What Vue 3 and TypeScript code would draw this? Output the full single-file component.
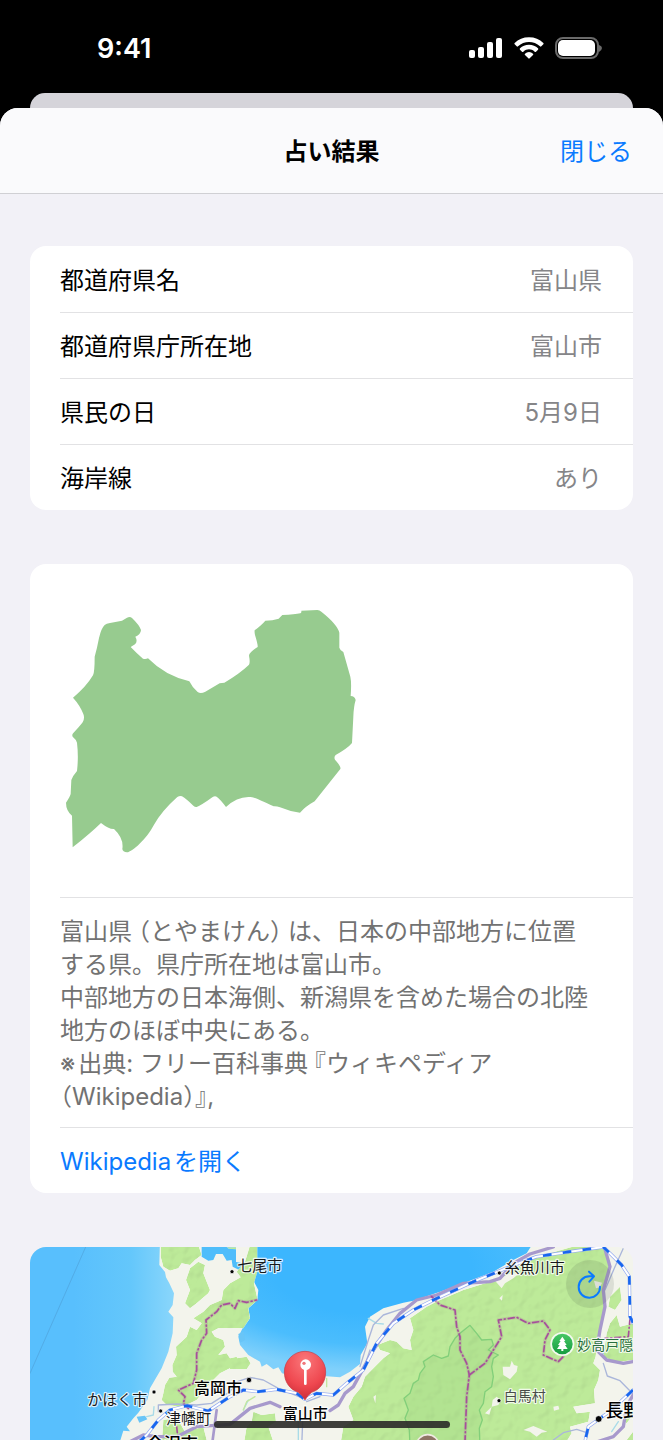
<script setup lang="ts">
interface Fact {
  label: string
  value: string
}

interface Place {
  name: string
  x: number
  y: number
  size: number
  kind: string
}

interface Dot {
  x: number
  y: number
  r: number
}

const facts: Fact[] = [
  { label: '都道府県名', value: '富山県' },
  { label: '都道府県庁所在地', value: '富山市' },
  { label: '県民の日', value: '5月9日' },
  { label: '海岸線', value: 'あり' },
]

const places: Place[] = [
  { name: '七尾市', x: 622, y: 94, size: 45, kind: 'town' },
  { name: '高岡市', x: 492, y: 463, size: 48, kind: 'city' },
  { name: 'かほく市', x: 172, y: 495, size: 45, kind: 'town' },
  { name: '津幡町', x: 408, y: 553, size: 45, kind: 'town' },
  { name: '金沢市', x: 350, y: 630, size: 51, kind: 'city' },
  { name: '富山市', x: 758, y: 537, size: 45, kind: 'city' },
  { name: '糸魚川市', x: 1424, y: 99, size: 45, kind: 'town' },
  { name: '妙高戸隠', x: 1642, y: 331, size: 42, kind: 'park' },
  { name: '白馬村', x: 1421, y: 482, size: 42, kind: 'village' },
  { name: '長野', x: 1726, y: 532, size: 54, kind: 'city' },
]

const dots: Dot[] = [
  { x: 606, y: 95, r: 6 },
  { x: 657, y: 420, r: 8 },
  { x: 372, y: 456, r: 6 },
  { x: 392, y: 513, r: 6 },
  { x: 1408, y: 99, r: 6 },
  { x: 1407, y: 482, r: 6 },
  { x: 1706, y: 537, r: 10 },
]

const railMain =
  'M325 608L350 585L385 540L420 510L470 497L535 513L600 470L640 450L685 455L740 448L800 460L825 478L860 460L910 465L950 430L1000 390L1040 310L1090 250L1150 210L1210 180L1330 125L1440 80L1520 50L1620 35L1720 21L1745 45L1775 75L1798 110L1800 230L1809 248'
const railNagano = 'M1809 450L1745 510L1675 560L1665 604'
</script>

<template>
  <div class="screen">
    <div class="status">
      <span class="clock">9:41</span>
      <div class="indicators">
        <svg width="34" height="22" viewBox="0 0 34 22" aria-hidden="true">
          <rect x="0" y="13" width="6" height="8" rx="2" fill="#fff" />
          <rect x="9" y="10" width="6" height="11" rx="2" fill="#fff" />
          <rect x="18" y="5" width="6" height="16" rx="2" fill="#fff" />
          <rect x="27" y="1" width="6" height="20" rx="2" fill="#fff" />
        </svg>
        <svg width="30" height="22" viewBox="0 0 90 66" aria-hidden="true">
          <path d="M45 1C62 1 77 7 88 18Q90 20 88 22L82 28Q80 30 78 28C69 19 57 15 45 15S21 19 12 28Q10 30 8 28L2 22Q0 20 2 18C13 7 28 1 45 1Z" fill="#fff" />
          <path d="M45 23C56 23 65 27 72 34Q74 36 72 38L66 44Q64 46 62 44C57 39 51 37 45 37S33 39 28 44Q26 46 24 44L18 38Q16 36 18 34C25 27 34 23 45 23Z" fill="#fff" />
          <path d="M45 45Q52 45 57 50Q59 52 57 54L47 64Q45 66 43 64L33 54Q31 52 33 50Q38 45 45 45Z" fill="#fff" />
        </svg>
        <svg width="47" height="22" viewBox="0 0 47 22" aria-hidden="true">
          <rect x="1" y="1" width="42" height="20" rx="7" fill="none" stroke="#6a6a6a" stroke-width="2" />
          <rect x="3" y="3" width="37" height="16" rx="5" fill="#fff" />
          <path d="M44 8Q47 9 47 11T44 15Z" fill="#6a6a6a" />
        </svg>
      </div>
    </div>
    <div class="behind"></div>
    <section class="sheet">
      <header class="bar">
        <h1>占い結果</h1>
        <button class="close" type="button">閉じる</button>
      </header>
      <main class="content">
        <dl class="card facts">
          <div v-for="fact in facts" :key="fact.label" class="fact">
            <dt>{{ fact.label }}</dt>
            <dd>{{ fact.value }}</dd>
          </div>
        </dl>

        <div class="card about">
          <div class="outline">
            <svg viewBox="90 -30 900 900" role="img" aria-label="富山県の形">
              <path
                fill="#97cb8f"
                d="M128 772L126 677Q108 662 108 638Q120 620 122 612L124 570Q128 558 141 543Q146 500 141 458Q138 448 128 440Q125 434 130 429Q150 408 158 397Q165 384 160 372Q150 346 129 323Q168 291 189 256Q194 246 194 200Q201 176 207 144Q214 114 224 105Q229 101 240 99L276 92L291 83Q300 79 306 84Q328 105 333 120Q332 134 316 140Q324 154 315 163L302 171Q318 188 339 206Q347 208 354 205Q405 257 478 274Q487 293 503 306Q512 312 526 305L569 280L583 278Q630 250 657 224Q661 217 657 197Q657 188 683 171Q684 164 675 135Q673 125 674 121Q696 104 706 92Q728 92 746 86Q752 80 757 75Q795 74 811 70Q815 68 814 62L862 60Q869 60 874 65Q922 103 928 128V173Q929 179 940 186L961 260Q965 277 962 318Q974 318 977 330Q971 350 970 380L966 459Q954 474 917 495Q911 501 915 509Q934 530 931 537L854 634Q827 649 810 668Q780 665 750 652Q739 648 731 649C690 631 676 621 655 621Q620 621 588 651Q572 629 560 620Q554 617 547 622Q514 646 500 651Q495 652 490 647Q469 627 456 619Q450 616 442 621Q396 662 372 704C350 746 308 785 291 787Q278 786 277 777Q282 745 252 717Q237 718 213 699Q180 731 128 772Z"
              />
            </svg>
          </div>
          <p class="text">
            富山県<span class="half open">（</span>とやまけん<span class="half shut">）</span>は、日本の中部地方に位置<br />
            する県。県庁所在地は富山市。<br />
            中部地方の日本海側、新潟県を含めた場合の北陸<br />
            地方のほぼ中央にある。<br />
            <span class="mark">※</span>出典: フリー百科事典<span class="half open">『</span>ウィキペディア<br />
            <span class="half">（</span>Wikipedia<span class="half">）』</span>,
          </p>
          <a class="link" href="#wikipedia">Wikipediaを開く</a>
        </div>

        <div class="map">
          <svg class="chart" viewBox="0 21 1809 579" preserveAspectRatio="xMidYMin slice" role="img" aria-label="富山市周辺の地図">
            <defs>
              <linearGradient id="sea" x1="0" y1="0" x2="1" y2="0">
                <stop offset="0.300" stop-color="#58bffd" />
                <stop offset="0.700" stop-color="#64c7fb" />
                <stop offset="1" stop-color="#8ad6fb" />
              </linearGradient>
              <radialGradient id="bay" cx="0.450" cy="0.200" r="0.750">
                <stop offset="0.450" stop-color="#3cb6fe" />
                <stop offset="0.750" stop-color="#4bbdfd" />
                <stop offset="1" stop-color="#7fd0fb" />
              </radialGradient>
              <radialGradient id="pin" cx="0.500" cy="0.200" r="0.850">
                <stop offset="0" stop-color="#fa777a" />
                <stop offset="0.600" stop-color="#ef4850" />
                <stop offset="1" stop-color="#c62934" />
              </radialGradient>
              <linearGradient id="leaf" x1="0" y1="0" x2="0" y2="1">
                <stop offset="0" stop-color="#46c765" />
                <stop offset="1" stop-color="#169c40" />
              </linearGradient>
              <filter id="relief" x="0" y="0" width="1" height="1" color-interpolation-filters="sRGB">
                <feTurbulence type="fractalNoise" baseFrequency="0.030" numOctaves="2" seed="8" result="noise" />
                <feDiffuseLighting in="noise" surfaceScale="1" diffuseConstant="1.150" lighting-color="#fff" result="light">
                  <feDistantLight azimuth="225" elevation="60" />
                </feDiffuseLighting>
                <feBlend in="SourceGraphic" in2="light" mode="multiply" result="lit" />
                <feComposite in="lit" in2="SourceGraphic" operator="in" />
              </filter>
            </defs>

            <rect x="0" y="0" width="1809" height="640" fill="#f3f4ec" />
            <path fill="url(#sea)" d="M0 0H390L388 75L405 96L408 112L418 130L432 160L428 195L415 215L430 232L428 280L415 335L395 385L360 445L352 480L325 518L310 535L290 560L300 574L280 572L265 620H0Z" />
            <path fill="url(#bay)" d="M682 0L678 95L672 125L685 150L682 180L655 205L660 235L640 260L625 290L630 315L655 345L690 365L695 380L710 372L730 388L745 382L756 400L800 410L880 408L930 412L960 395L990 372L992 345L1012 310L1005 260L1020 230L1060 205L1120 188L1150 182L1230 155L1300 130L1390 95L1450 60L1490 40L1515 0Z" />
            <path fill="#4fbdfb" d="M515 0V50L535 62L550 60L558 42L578 42L590 62L605 60L608 80L632 92L640 70L618 66V0Z" />
            <path fill="#69c5f7" d="M625 282L640 275L646 300L630 308ZM320 530L345 527L352 538L328 548ZM1392 570L1408 568V584L1394 586ZM1715 340L1750 330L1740 350Z" />

            <g fill="#bdea99" filter="url(#relief)">
              <path d="M392 0H500L515 45L495 60L480 75L455 70L445 85L420 92L400 80L392 50Z" />
              <path d="M505 65L525 75L520 100L540 150L535 160L500 190L480 205L465 190L480 150L468 120L480 85Z" />
              <path d="M665 0H682V95L672 130L683 180L655 205L660 235L640 265L600 265L565 265L545 275L555 290L580 300L585 320L565 345L590 340L600 355L620 350L628 370L600 385L570 400L540 430L500 480L480 490L450 500L410 495L395 480L400 460L405 435L418 413L440 410L428 395L427 375L440 345L438 320L470 290L480 260L500 270L515 250L490 235L520 215L540 195L575 180L580 150L600 130L632 112L620 95L645 65Z" />
              <path d="M600 358L650 350L662 370L650 388L600 388Z" />
              <path d="M670 515L695 525L735 520L738 545L715 560L735 620H640L650 560L665 545Z" />
              <path d="M400 540L430 535L450 550L465 575L520 560L535 620H395Z" />
              <path d="M590 22H618V28L596 26Z" />
              <path d="M1225 182L1300 150L1380 125L1440 95L1480 70L1540 45L1700 0H1725L1738 80L1720 150L1725 200L1705 280L1697 350L1690 370L1710 390L1705 420L1692 450L1695 490L1630 500L1640 520L1680 515L1675 545L1620 560L1625 580L1600 620H930L940 560L970 540L955 500L970 470L995 440L1005 410L1030 385L1060 355L1080 340L1050 330L1042 315L1080 300L1100 305L1120 325L1145 330L1140 300L1150 270L1140 235L1190 200Z" />
              <path d="M1720 350L1730 280L1740 250L1760 225L1770 260L1809 250V360L1760 367Z" />
              <path d="M1740 170L1770 140L1775 180L1755 210L1735 200Z" />
              <path d="M1780 540L1809 490V525L1790 550Z" />
              <path d="M1790 600L1809 575V610Z" />
            </g>

            <path fill="#8ccd78" fill-opacity="0.220" stroke="#82cf7a" stroke-width="4" stroke-linejoin="round" d="M1140 620L1138 570L1125 535L1135 510L1122 475L1140 460L1150 430L1165 420L1170 400L1185 380L1180 365L1210 345L1235 355L1255 348L1260 320L1275 295L1290 280L1305 268L1320 256L1340 280L1355 300L1385 298L1390 315L1375 330L1405 345L1390 355L1385 380L1390 410L1385 440L1365 455L1360 490L1348 510L1357 540L1348 565L1350 620Z" />
            <path fill="#f3f4ec" d="M1445 362L1452 375L1463 378L1460 395L1440 418L1420 405L1418 380L1440 380ZM1395 122L1440 100L1468 100L1450 115L1425 130L1415 145ZM1692 122L1716 128L1710 142L1698 145ZM1365 520L1385 500L1388 480L1400 470L1412 480L1405 495L1385 500L1378 524ZM1480 570L1510 558L1552 575L1535 578L1520 590L1500 575ZM1570 500L1585 497L1588 508L1572 512ZM1030 470L1038 465L1036 490ZM1408 175L1418 165L1416 182Z" />

            <g fill="none" stroke-linejoin="round" stroke-linecap="round">
              <path stroke="#4b95cb" stroke-width="2" opacity="0.700" d="M167 21L0 400" />
              <path stroke="#a9dbe8" stroke-width="4" d="M350 530L370 525L372 500M1015 235L1040 250L1060 252M640 510L655 480M805 540V600M1745 575L1765 545" />
              <path stroke="#c3e79f" stroke-width="4" d="M640 510L650 485L675 470M890 415L890 440" />
              <path stroke="#aab6da" stroke-width="4" d="M385 515V495L440 492L500 495L545 490L600 455L622 425L660 412L700 420L745 445L822 476M990 380L1015 300L1030 255L1060 225L1120 205M1000 390L1020 330M818 545L815 620M1780 25L1755 80L1725 150M1720 370L1732 408L1770 422L1809 462M1570 600L1600 578L1640 568L1670 578M830 485L870 470" />
              <g stroke="#a799cc" stroke-width="10">
                <path d="M300 605L340 585L380 590L440 590L500 560L600 553L660 505L720 487L750 500" />
                <path d="M900 512L925 495L945 460L970 440L1000 385L1030 330L1070 270L1110 220L1160 180L1220 165L1300 130L1380 125L1410 115L1450 70L1500 42L1570 21" />
                <path d="M1720 10L1740 80L1720 150L1725 200L1710 270L1700 330L1730 360L1780 370L1809 365" />
                <path d="M1700 606L1750 590L1780 560L1790 500L1809 465" />
                <path stroke-width="8" d="M560 510L548 600" />
              </g>
              <g stroke="#a8579b" stroke-width="10" opacity="0.220">
                <path d="M475 505L460 490L465 470L445 450L490 430L500 390V340L515 300L530 280L528 240L560 215L575 195L600 190L615 205L625 182L650 187L680 180" />
                <path d="M1205 170L1230 195L1275 210L1280 260L1290 290V330L1310 370L1318 405L1310 470L1305 605M1318 405L1365 370L1390 330L1415 290L1405 240L1460 232L1495 250L1540 243L1560 270L1545 300L1540 345L1585 365L1600 350" />
              </g>
              <g stroke="#a64f9b" stroke-width="5" stroke-dasharray="18 9 3 9">
                <path d="M475 505L460 490L465 470L445 450L490 430L500 390V340L515 300L530 280L528 240L560 215L575 195L600 190L615 205L625 182L650 187L680 180M440 560L445 605" />
                <path d="M1205 170L1230 195L1275 210L1280 260L1290 290V330L1310 370L1318 405L1310 470L1305 605" />
                <path d="M1318 405L1365 370L1390 330L1415 290L1405 240L1460 232L1495 250L1540 243L1560 270L1545 300L1540 345L1585 365L1600 350M1800 235L1795 290L1725 295" />
              </g>
              <path :d="railMain" stroke="#90a7f0" stroke-width="10" />
              <path :d="railMain" stroke="#fff" stroke-width="6" />
              <path :d="railMain" stroke="#1766ef" stroke-width="8" stroke-dasharray="26 34" stroke-linecap="butt" />
              <path :d="railNagano" stroke="#90a7f0" stroke-width="10" />
              <path :d="railNagano" stroke="#fff" stroke-width="6" />
              <path :d="railNagano" stroke="#1766ef" stroke-width="8" stroke-dasharray="26 34" stroke-linecap="butt" />
            </g>

            <circle v-for="dot in dots" :key="dot.x" :cx="dot.x" :cy="dot.y" :r="dot.r" fill="#050505" stroke="#fff" stroke-width="2" />

            <circle cx="1193" cy="618" r="34" fill="#8f7466" stroke="#efe9e2" stroke-width="5" />

            <circle cx="1597" cy="312" r="36" fill="#f4faef" />
            <circle cx="1597" cy="312" r="31" fill="url(#leaf)" />
            <path fill="#fff" d="M1597 290L1606 303H1602L1610 315H1605L1613 327H1600V333H1594V327H1581L1589 315H1584L1592 303H1588Z" />

            <text v-for="place in places" :key="place.name" :x="place.x" :y="place.y" :font-size="place.size" :class="['place', place.kind]">{{ place.name }}</text>

            <path fill="url(#pin)" stroke="#c93a43" stroke-width="2" d="M825 480Q818 467 805 457C779 449 763 425 763 396A62 62 0 0 1 887 396C887 425 871 449 845 457Q832 467 825 480Z" />
            <path stroke="#fff" stroke-width="8" stroke-linecap="round" d="M826 385V431" />
            <circle cx="827" cy="374" r="16" fill="#fff" />
            <circle cx="822" cy="370" r="5" fill="#ef777b" />
          </svg>
          <button class="reload" type="button" aria-label="再読み込み">
            <svg width="48" height="48" viewBox="0 0 144 144" fill="none" stroke="#0a7aff" stroke-width="6" stroke-linecap="round" stroke-linejoin="round" aria-hidden="true">
              <path d="M102 80A32 32 0 1 1 70 49H84M69 35L84 49L70 65" />
            </svg>
          </button>
        </div>
      </main>
    </section>
    <div class="home"></div>
  </div>
</template>

<style>
html,
body {
  background: #000;
}
</style>

<style scoped>
.screen {
  position: relative;
  display: flex;
  flex-direction: column;
  height: 100vh;
  overflow: hidden;
  background: #000;
  color: #000;
  font-family: Inter, 'Noto Sans CJK JP', sans-serif;
  font-size: 24px;
  line-height: 33px;
}

.status {
  display: flex;
  flex: none;
  align-items: center;
  justify-content: space-between;
  height: 93px;
  padding: 3px 61px 0 97px;
  box-sizing: border-box;
  color: #fff;
}

.clock {
  font-size: 27px;
  font-weight: 600;
}

.indicators {
  display: flex;
  gap: 11px;
}

.behind {
  flex: none;
  height: 15px;
  margin: 0 30px;
  border-radius: 15px 15px 0 0;
  background: #d5d4da;
}

.sheet {
  display: flex;
  flex: 1;
  flex-direction: column;
  min-height: 0;
  overflow: hidden;
  border-radius: 18px 18px 0 0;
  background: #f2f1f7;
}

.bar {
  display: grid;
  flex: none;
  grid-template-columns: 1fr auto 1fr;
  align-items: center;
  height: 86px;
  padding: 2px 31px 0;
  box-sizing: border-box;
  border-bottom: 1px solid #d0d0d4;
  background: #fafafc;
}

h1 {
  grid-column: 2;
  margin: 0;
  font-size: 24px;
  font-weight: 600;
}

.close {
  justify-self: end;
  padding: 0;
  border: 0;
  background: none;
  color: #0a7aff;
  font: inherit;
  cursor: pointer;
}

.content {
  display: flex;
  flex: 1;
  flex-direction: column;
  gap: 54px;
  min-height: 0;
  padding: 52px 30px 0;
}

.card {
  flex: none;
  margin: 0;
  border-radius: 16px;
  background: #fff;
}

.facts {
  padding-left: 30px;
}

.fact {
  display: flex;
  align-items: center;
  justify-content: space-between;
  height: 66px;
  padding: 2px 31px 0 0;
  box-sizing: border-box;
}

.fact + .fact {
  border-top: 1px solid #e2e2e4;
}

dd {
  margin: 0;
  color: #858588;
}

.about {
  padding-left: 30px;
}

.outline {
  padding: 16px 0 17px;
}

.outline svg {
  display: block;
  width: 300px;
  height: 300px;
}

.text {
  margin: 0;
  padding: 17px 0 14px;
  border-top: 1px solid #e2e2e4;
  border-bottom: 1px solid #e2e2e4;
  color: #727272;
  white-space: nowrap;
}

.half {
  font-feature-settings: 'halt';
}

.open {
  margin-left: 6px;
}

.shut {
  margin-right: 6px;
}

.mark {
  margin-right: 3px;
}

.link {
  display: block;
  padding: 17px 0 15px;
  color: #0a7aff;
  text-autospace: normal;
  text-decoration: none;
}

.map {
  position: relative;
  flex: 1;
  min-height: 0;
  overflow: hidden;
  border-radius: 16px 16px 0 0;
}

.chart {
  display: block;
  width: 100%;
  height: 100%;
}

.place {
  fill: #16181a;
  stroke: #fff;
  stroke-width: 7px;
  stroke-linejoin: round;
  stroke-opacity: 0.8;
  paint-order: stroke;
}

.city {
  fill: #000;
  font-weight: 500;
}

.village {
  fill: #484c48;
}

.park {
  fill: #28703c;
}

.reload {
  position: absolute;
  top: 13px;
  right: 19px;
  width: 48px;
  height: 48px;
  padding: 0;
  border: 0;
  border-radius: 50%;
  background: rgba(60, 80, 60, 0.13);
  cursor: pointer;
}

.reload svg {
  display: block;
}

.home {
  position: absolute;
  bottom: 12px;
  left: 50%;
  width: 236px;
  height: 7px;
  margin-left: -118px;
  border-radius: 4px;
  background: rgba(42, 42, 40, 0.9);
}
</style>
